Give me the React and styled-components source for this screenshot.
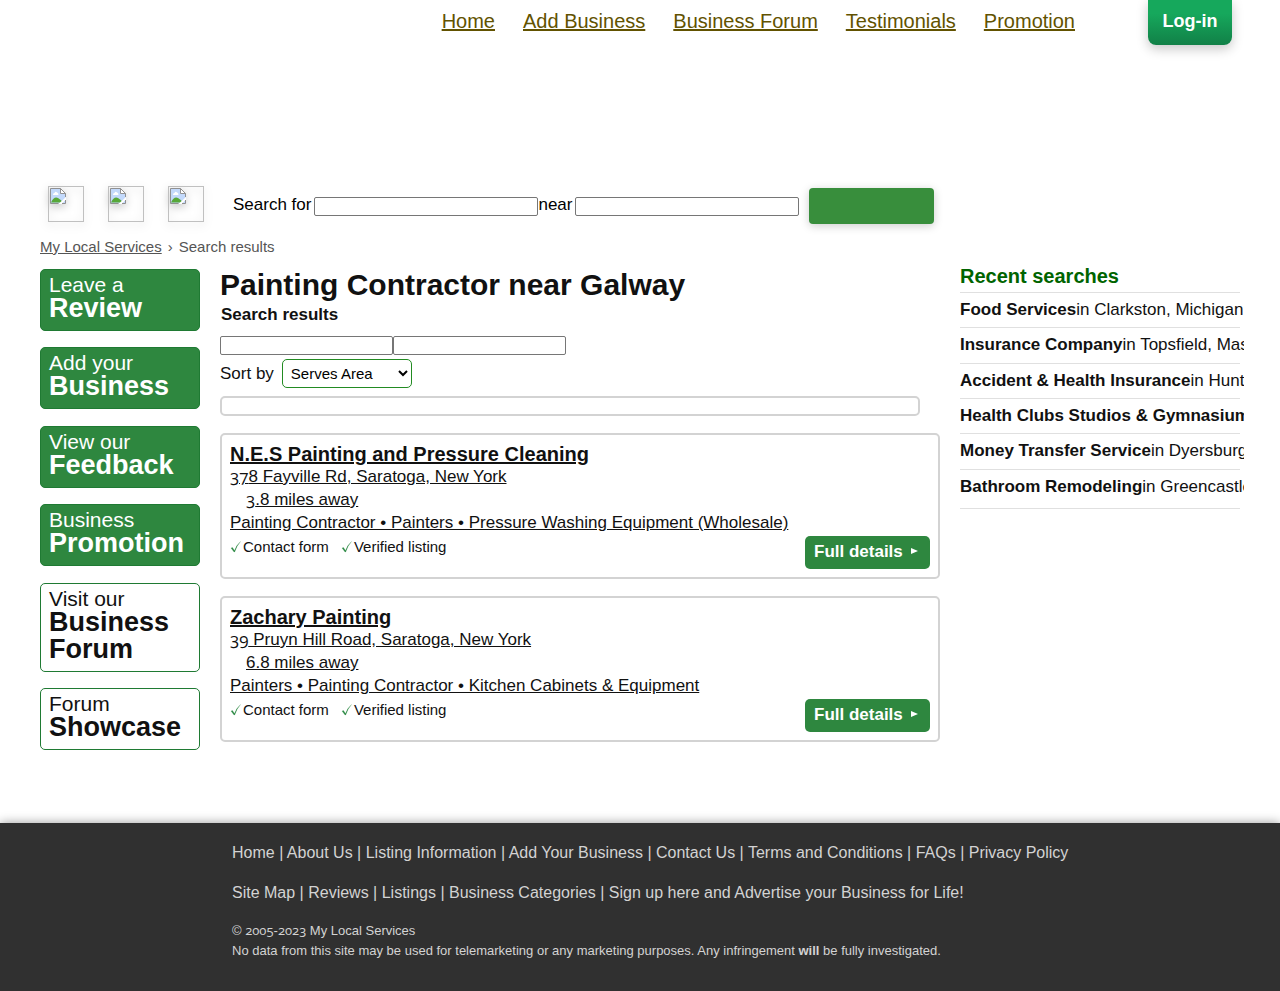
import React from "react";
import styled, { createGlobalStyle } from "styled-components";

const GlobalStyle = createGlobalStyle`
  *, *::before, *::after { box-sizing: border-box; }
  body {
    margin: 0;
    background: #fff;
    color: #111;
    font-family: "Liberation Sans", Arial, sans-serif;
    font-size: 17px;
    line-height: 22px;
  }
  h1, h2, h3, p, ul { margin: 0; padding: 0; }
  ul { list-style: none; }
  a { color: inherit; }
`;

const Page = styled.div`
  display: flex;
  flex-direction: column;
  min-height: 100vh;
`;

const Wrap = styled.div`
  width: 100%;
  max-width: 1200px;
  margin: 0 auto;
`;

const Header = styled.header`
  display: flex;
  justify-content: flex-end;
  align-items: flex-start;
  height: 186px;
  padding-right: 8px;
`;

const Nav = styled.nav`
  display: flex;
  gap: 28px;
  margin-right: 73px;
  padding-top: 9px;
  color: #625200;
  font-size: 20px;
  line-height: 24px;
`;

const LoginLink = styled.a`
  width: 84px;
  height: 45px;
  padding-top: 9px;
  border-radius: 0 0 8px 8px;
  background: linear-gradient(#16a85c 30%, #118047);
  box-shadow: 0 4px 12px rgba(0, 0, 0, 0.22);
  color: #fff;
  font-size: 18px;
  font-weight: bold;
  line-height: 24px;
  text-align: center;
  text-decoration: none;
`;

const SearchBar = styled.div`
  display: flex;
  align-items: flex-start;
`;

const ShareLinks = styled.div`
  display: flex;
  gap: 24px;
  width: 193px;
  padding-left: 8px;
`;

const ShareLink = styled.a`
  display: block;
  width: 36px;
  height: 36px;
  padding: 1px;
  border: 1px solid #c0c0c0;
  filter: drop-shadow(0 3px 4px rgba(0, 0, 0, 0.2));
`;

const SearchForm = styled.form`
  display: flex;
  align-items: center;
  padding-top: 2px;
  color: #000;

  label { margin-right: 3px; line-height: 33px; align-self: flex-start; }
`;

const TextInput = styled.input`
  width: ${(p) => p.$width}px;
  height: 19px;
  padding: 1px 2px;
  border: 1px solid #767676;
  border-radius: 2px;
  background: #fff;
  font: 13px "Liberation Sans", Arial, sans-serif;
`;

const SearchButton = styled.button`
  width: 125px;
  height: 36px;
  margin-left: 10px;
  border: 0;
  border-radius: 4px;
  background: #388e3c;
  box-shadow: 0 2px 10px rgba(0, 0, 0, 0.2);
`;

const Crumbs = styled.nav`
  display: flex;
  gap: 6px;
  margin-top: 12px;
  color: #555;
  font-size: 15px;
`;

const Columns = styled.div`
  display: grid;
  grid-template-columns: 160px minmax(0, 720px) 280px;
  gap: 20px;
  align-items: start;
  padding-top: 11px;
`;

const SideLinks = styled.nav`
  display: flex;
  flex-direction: column;
  justify-content: space-between;
  min-height: 481px;
`;

const SideLink = styled.a`
  display: block;
  padding: 4px 8px 8px;
  border: 1px solid #1f7a33;
  border-radius: 5px;
  background: ${(p) => (p.$outline ? "#fff" : "#2e873f")};
  color: ${(p) => (p.$outline ? "#111" : "#fff")};
  font-size: 21px;
  line-height: 21px;
  text-decoration: none;

  strong {
    display: block;
    font-size: 27px;
    line-height: 27px;
  }
`;

const Title = styled.h1`
  font-size: 30px;
  line-height: 32px;
`;

const Subtitle = styled.h2`
  margin-bottom: 8px;
  padding-left: 1px;
  font-size: 17px;
  line-height: 27px;
`;

const Filters = styled.form`
  display: flex;
  flex-wrap: wrap;
`;

const SortRow = styled.div`
  display: flex;
  align-items: center;
  gap: 8px;
  width: 100%;
  margin-top: 4px;
`;

const Select = styled.select`
  width: 130px;
  height: 29px;
  padding: 0 4px;
  border: 1px solid #228b22;
  border-radius: 5px;
  background: #fff;
  color: #000;
  font: 15px "Liberation Sans", Arial, sans-serif;
`;

const EmptyBox = styled.div`
  height: 20px;
  margin: 8px 20px 17px 0;
  border: 2px solid #d3d3d3;
  border-radius: 5px;
`;

const Card = styled.article`
  display: flex;
  flex-direction: column;
  min-height: 146px;
  margin-bottom: 17px;
  padding: 8px;
  border: 2px solid #d3d3d3;
  border-radius: 5px;
`;

const CardLink = styled.a`
  display: block;
  line-height: 22px;
`;

const CardTitle = styled.h3`
  font-size: 20px;
  line-height: 23px;
`;

const Distance = styled.p`
  padding-left: 16px;
  line-height: 24px;
`;

const CardFoot = styled.div`
  display: flex;
  justify-content: space-between;
  padding-top: 2px;
`;

const Flags = styled.ul`
  display: flex;
  gap: 12px;
  font-size: 15px;
`;

const Flag = styled.li`
  display: flex;
  gap: 2px;

  svg { margin-top: 5px; }
`;

const DetailsLink = styled.a`
  display: flex;
  gap: 7px;
  width: 125px;
  height: 33px;
  padding-left: 9px;
  border-radius: 5px;
  background: #2e873f;
  color: #fff;
  font-weight: bold;
  line-height: 31px;
  white-space: nowrap;
  text-decoration: none;

  svg { margin-top: 11px; }
`;

const OldStyle = styled.span`
  font-family: "Open Sans", "Liberation Sans", sans-serif;
  font-variant-numeric: oldstyle-nums;
  line-height: 1;
`;

const Recent = styled.aside`
  margin-top: -4px;
`;

const RecentTitle = styled.h2`
  color: #006400;
  font-size: 20px;
  line-height: 22px;
`;

const RecentList = styled.ul`
  display: grid;
  grid-template-columns: minmax(0, 1fr);
  grid-auto-rows: 1fr;
  min-height: 217px;
  margin-top: 5px;
  padding-bottom: 4px;
  border-bottom: 1px solid #e0e0e0;
`;

const RecentItem = styled.li`
  overflow: clip;
  overflow-clip-margin: 4px;
  border-top: 1px solid #e0e0e0;
  line-height: 33px;
  white-space: nowrap;

  a { text-decoration: none; }
`;

const Footer = styled.footer`
  flex: 1;
  margin-top: 64px;
  padding-bottom: 29px;
  background: #303030;
  box-shadow: 0 0 10px rgba(0, 0, 0, 0.4);
  color: #d3d3d3;
`;

const FooterBody = styled(Wrap)`
  padding: 10px 20px 0 192px;
`;

const FooterLinks = styled.p`
  font-size: 16px;
  line-height: 40px;

  a { text-decoration: none; }
`;

const SmallPrint = styled.p`
  padding-top: 8px;
  font-size: 13px;
  line-height: 20px;
`;

const BrokenImage = () => (
  <svg width="16" height="16" viewBox="0 0 16 16" aria-hidden="true">
    <path d="M.5.5h10l5 5v10H.5z" fill="#c3d9fb" />
    <path d="M3 7q0-2 1.500-2 1-2 2.500-.5Q8.500 4.500 8.500 7z" fill="#fff" />
    <path d="M1 14.500q3-6.500 7-4.500 3 1.500 5 4.500z" fill="#57a839" />
    <path d="M8.500 16 16 9v2.500L11.500 16z" fill="#fff" />
    <path d="M.5 15.500V.5h10l5 5V9M.5 15.500H8.500M12 15.500h3.500V12" fill="none" stroke="#919191" />
    <path d="M10.500.5v5h5z" fill="#fff" stroke="#919191" />
  </svg>
);

const Check = () => (
  <svg width="11" height="12" viewBox="0 0 11 12" aria-hidden="true">
    <path d="M1 7 2.500 6.500 4.500 9.500Q6.500 4 10.500.5 6.500 5 4.700 11H4Z" fill="#2e8b45" stroke="#2e8b45" strokeWidth=".2" />
  </svg>
);

const Arrow = () => (
  <svg width="8" height="8" viewBox="0 0 8 8" aria-hidden="true">
    <path d="M1 1 8 4 1 7z" fill="#fff" />
  </svg>
);

const navItems = ["Home", "Add Business", "Business Forum", "Testimonials", "Promotion"];

const sideItems = [
  { top: "Leave a", main: "Review" },
  { top: "Add your", main: "Business" },
  { top: "View our", main: "Feedback" },
  { top: "Business", main: "Promotion" },
  { top: "Visit our", main: "Business Forum", outline: true },
  { top: "Forum", main: "Showcase", outline: true },
];

const listings = [
  {
    name: "N.E.S Painting and Pressure Cleaning",
    address: "378 Fayville Rd, Saratoga, New York",
    distance: "3.8 miles away",
    tags: "Painting Contractor • Painters • Pressure Washing Equipment (Wholesale)",
  },
  {
    name: "Zachary Painting",
    address: "39 Pruyn Hill Road, Saratoga, New York",
    distance: "6.8 miles away",
    tags: "Painters • Painting Contractor • Kitchen Cabinets & Equipment",
  },
];

const recent = [
  ["Food Services", "in Clarkston, Michigan"],
  ["Insurance Company", "in Topsfield, Massachusetts"],
  ["Accident & Health Insurance", "in Huntington"],
  ["Health Clubs Studios & Gymnasiums", "in Dover"],
  ["Money Transfer Service", "in Dyersburg, Tennessee"],
  ["Bathroom Remodeling", "in Greencastle, Indiana"],
];

const footerRows = [
  ["Home", "About Us", "Listing Information", "Add Your Business", "Contact Us", "Terms and Conditions", "FAQs", "Privacy Policy"],
  ["Site Map", "Reviews", "Listings", "Business Categories", "Sign up here and Advertise your Business for Life!"],
];

// Sets every run of old-style digits in the text; 6 and 8 keep the body face.
const Figures = ({ text }) =>
  text.split(/([0-579]+)/).map((part, i) =>
    i % 2 ? <OldStyle key={i}>{part}</OldStyle> : part
  );

export default function App() {
  return (
    <Page>
      <GlobalStyle />
      <Wrap>
        <Header>
          <Nav>
            {navItems.map((item) => (
              <a href="#" key={item}>{item}</a>
            ))}
          </Nav>
          <LoginLink href="#">Log-in</LoginLink>
        </Header>

        <SearchBar>
          <ShareLinks>
            {["Facebook", "Twitter", "Email"].map((name) => (
              <ShareLink href="#" aria-label={name} key={name}>
                <BrokenImage />
              </ShareLink>
            ))}
          </ShareLinks>
          <SearchForm>
            <label htmlFor="what">Search for</label>
            <TextInput id="what" $width={224} />
            <label htmlFor="where">near</label>
            <TextInput id="where" $width={224} />
            <SearchButton type="button" aria-label="Search" />
          </SearchForm>
        </SearchBar>

        <Crumbs aria-label="Breadcrumb">
          <a href="#">My Local Services</a>
          <span>›</span>
          <span>Search results</span>
        </Crumbs>

        <Columns>
          <SideLinks>
            {sideItems.map((item) => (
              <SideLink href="#" key={item.main} $outline={item.outline}>
                {item.top}
                <strong>{item.main}</strong>
              </SideLink>
            ))}
          </SideLinks>

          <main>
            <Title>Painting Contractor near Galway</Title>
            <Subtitle>Search results</Subtitle>
            <Filters>
              <TextInput $width={173} aria-label="Category" />
              <TextInput $width={173} aria-label="Location" />
              <SortRow>
                <label htmlFor="sort">Sort by</label>
                <Select id="sort">
                  <option>Serves Area</option>
                </Select>
              </SortRow>
            </Filters>
            <EmptyBox />
            {listings.map((item) => (
              <Card key={item.name}>
                <CardTitle><a href="#">{item.name}</a></CardTitle>
                <CardLink href="#"><Figures text={item.address} /></CardLink>
                <Distance><a href="#"><Figures text={item.distance} /></a></Distance>
                <CardLink href="#">{item.tags}</CardLink>
                <CardFoot>
                  <Flags>
                    <Flag><Check />Contact form</Flag>
                    <Flag><Check />Verified listing</Flag>
                  </Flags>
                  <DetailsLink href="#">Full details<Arrow /></DetailsLink>
                </CardFoot>
              </Card>
            ))}
          </main>

          <Recent>
            <RecentTitle>Recent searches</RecentTitle>
            <RecentList>
              {recent.map(([what, where]) => (
                <RecentItem key={what}>
                  <a href="#"><b>{what}</b>{where}</a>
                </RecentItem>
              ))}
            </RecentList>
          </Recent>
        </Columns>
      </Wrap>

      <Footer>
        <FooterBody>
          {footerRows.map((row) => (
            <FooterLinks key={row[0]}>
              {row.map((item, i) => (
                <React.Fragment key={item}>
                  {i > 0 && " | "}
                  <a href="#">{item}</a>
                </React.Fragment>
              ))}
            </FooterLinks>
          ))}
          <SmallPrint>
            <Figures text="© 2005-2023 My Local Services" />
            <br />
            No data from this site may be used for telemarketing or any marketing purposes. Any infringement <b>will</b> be fully investigated.
          </SmallPrint>
        </FooterBody>
      </Footer>
    </Page>
  );
}
